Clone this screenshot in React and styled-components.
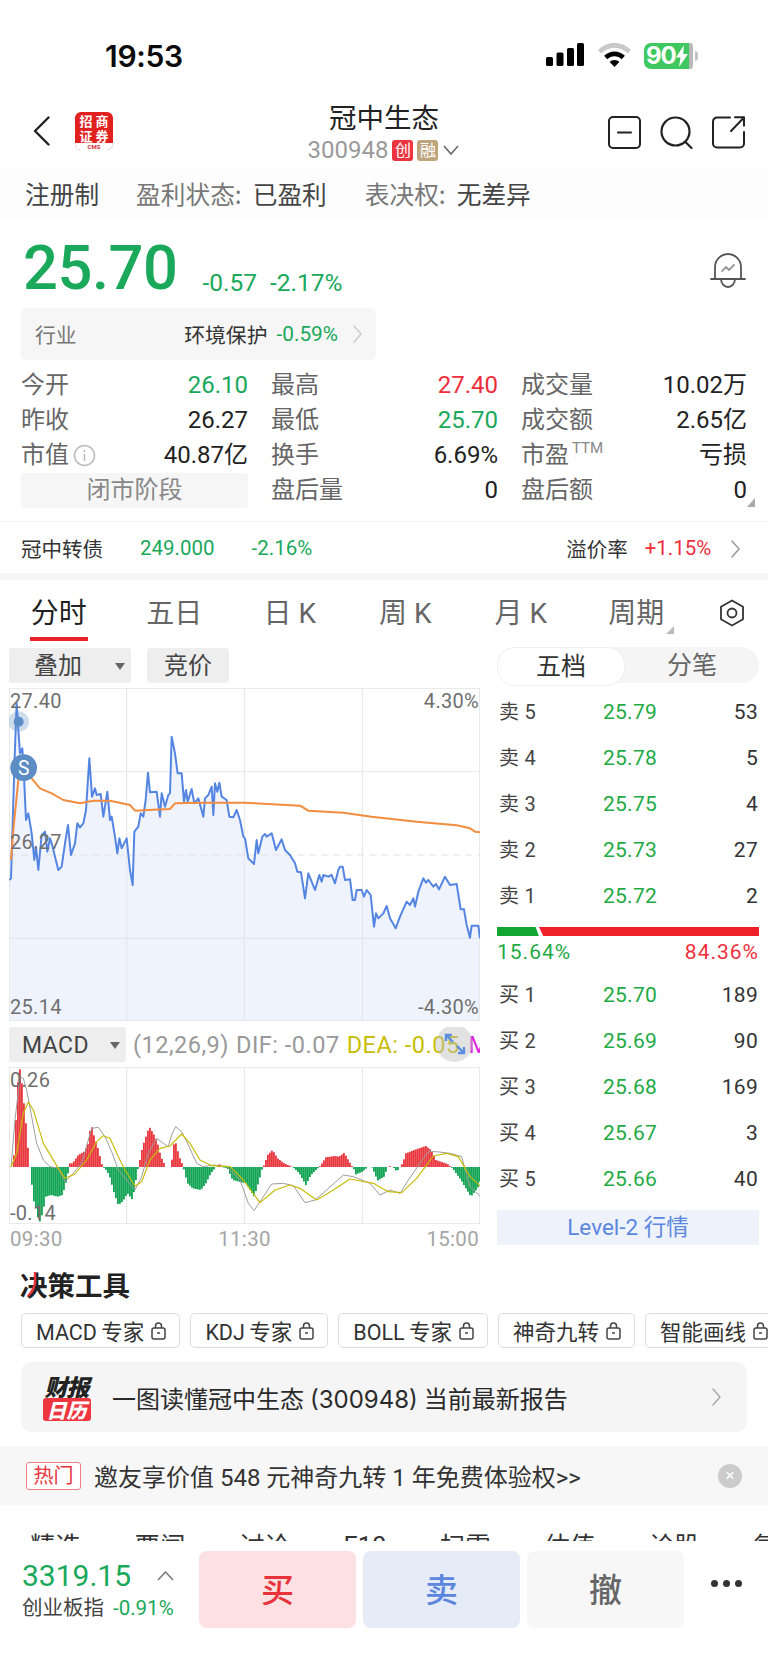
import React from 'react';
import styled, { createGlobalStyle } from 'styled-components';

const GREEN = '#1aa85b';
const RED = '#ee2f3b';

const GlobalStyle = createGlobalStyle`
	html, body {
		margin: 0;
		padding: 0;
		background: #fff;
	}
	body {
		font-family: Roboto, "Noto Sans CJK SC", sans-serif;
		color: #222;
	}
	* {
		box-sizing: border-box;
	}
`;

const Page = styled.div`
	width: 768px;
	height: 1669px;
	overflow: hidden;
	background: #fff;
	display: flex;
	flex-direction: column;
`;

/* status bar */
const StatusBar = styled.div`
	height: 104px;
	padding: 43px 75px 0 105px;
	display: flex;
	align-items: flex-start;
`;

const Clock = styled.div`
	font-size: 30px;
	line-height: 27px;
	font-weight: 600;
	font-family: Inter, sans-serif;
	letter-spacing: -0.3px;
	color: #0b0b0b;
`;

const StatusIcons = styled.div`
	margin-left: auto;
	display: flex;
	align-items: flex-start;
	gap: 14px;
`;

const Battery = styled.div`
	position: relative;
	width: 49px;
	height: 26px;
	margin-left: -1px;
	display: flex;
	align-items: center;
	justify-content: flex-start;
	padding-left: 2px;
	border-radius: 7px 3px 3px 7px;
	background: linear-gradient(90deg, #3fc85f 0 45px, #b9b9b9 45px);
	color: #fff;
	font-size: 24px;
	font-weight: 700;
	line-height: 26px;
	font-family: Inter, sans-serif;
	letter-spacing: -1px;
	&::after {
		content: '';
		position: absolute;
		right: -5px;
		top: 8px;
		width: 3px;
		height: 10px;
		border-radius: 0 3px 3px 0;
		background: #c4c4c4;
	}
`;

/* header */
const Header = styled.div`
	height: 66px;
	padding: 8px 23px 0;
	display: grid;
	grid-template-columns: 1fr auto 1fr;
`;

const HeaderLeft = styled.div`
	display: flex;
	align-items: center;
	align-self: start;
	height: 38px;
	padding-left: 10px;
	gap: 25px;
`;

const AppLogo = styled.div`
	width: 38px;
	height: 38px;
	border-radius: 6px;
	overflow: hidden;
	background: #e0211f;
	display: flex;
	flex-direction: column;
`;

const LogoText = styled.div`
	height: 31px;
	padding: 2px 3px 0;
	display: grid;
	grid-template-columns: 1fr 1fr;
	color: #fff;
	font-size: 13px;
	line-height: 14px;
	font-weight: 700;
	font-family: "Noto Sans CJK SC", sans-serif;
	text-align: center;
	white-space: nowrap;
`;

const LogoFoot = styled.div`
	flex: 1;
	background: #fff;
	color: #c33;
	font-size: 6px;
	line-height: 7px;
	text-align: center;
	font-weight: 700;
`;

const HeaderCenter = styled.div`
	margin-top: -9px;
	display: flex;
	flex-direction: column;
	align-items: center;
`;

const Title = styled.div`
	font-size: 27.5px;
	line-height: 26px;
	color: #222;
	font-family: "Noto Sans CJK SC", sans-serif;
`;

const CodeRow = styled.div`
	margin-top: 11px;
	height: 20px;
	display: flex;
	align-items: center;
	color: #9a9a9a;
	font-size: 24px;
`;

const CodeTag = styled.span`
	width: 21px;
	height: 21px;
	margin-left: ${p => p.$gap}px;
	border-radius: 3px;
	background: ${p => p.$bg};
	color: #fff;
	font-size: 16px;
	line-height: 21px;
	text-align: center;
`;

const HeaderRight = styled.div`
	justify-self: end;
	padding-top: 4px;
	display: flex;
	gap: 19px;
`;

/* meta row */
const MetaRow = styled.div`
	height: 49px;
	padding: 0 0 4px 25px;
	background: #fdfdfd;
	display: flex;
	align-items: center;
	font-size: 24.7px;
	color: #444;
	font-family: "Noto Sans CJK SC", sans-serif;
`;

const MetaItem = styled.span`
	margin-left: ${p => p.$gap || 0}px;
	color: ${p => p.$color || '#444'};
`;

/* price */
const PriceRow = styled.div`
	height: 89px;
	padding: 26px 22px 0 23px;
	display: flex;
	align-items: flex-start;
`;

const Price = styled.div`
	font-size: 61.5px;
	line-height: 46px;
	font-weight: 500;
	color: ${GREEN};
	letter-spacing: -0.5px;
`;

const PriceChange = styled.div`
	margin-left: ${p => p.$gap}px;
	margin-top: 27px;
	font-size: 24.5px;
	line-height: 22px;
	color: ${GREEN};
`;

const BellWrap = styled.div`
	margin-left: auto;
	margin-top: 7px;
`;

/* industry box */
const IndustryBox = styled.div`
	width: 355px;
	height: 52px;
	margin-left: 21px;
	padding: 0 14px;
	border-radius: 6px;
	background: #f6f6f6;
	display: flex;
	align-items: center;
	font-size: 20.8px;
`;

const IndustryLabel = styled.span`
	color: #777;
	margin-right: auto;
`;

const IndustryName = styled.span`
	color: #333;
`;

const IndustryChange = styled.span`
	margin: 0 15px 0 9px;
	color: ${GREEN};
`;

/* stats */
const Stats = styled.div`
	position: relative;
	padding: 8px 21px 13px 21px;
	display: grid;
	grid-template-columns: 227px 227px 226px;
	column-gap: 23px;
	border-bottom: 1px solid #f2f2f2;
`;

const Stat = styled.div`
	height: 35px;
	display: flex;
	align-items: center;
	justify-content: space-between;
	font-size: 24px;
	line-height: 35px;
	white-space: nowrap;
`;

const StatLabel = styled.span`
	color: #666;
	display: inline-flex;
	align-items: center;
`;

const StatValue = styled.span`
	color: ${p => p.$color || '#222'};
`;

const Sup = styled.span`
	font-size: 15px;
	line-height: 15px;
	margin: -14px 0 0 3px;
	color: #888;
`;

const PhaseCell = styled.div`
	height: 35px;
	border-radius: 4px;
	background: #f6f6f6;
	color: #888;
	font-size: 24px;
	line-height: 35px;
	text-align: center;
`;

const CornerMark = styled.div`
	position: absolute;
	right: 13px;
	bottom: 14px;
	width: 0;
	height: 0;
	border-left: 8px solid transparent;
	border-bottom: 9px solid #aaa;
`;

/* bond row */
const BondRow = styled.div`
	height: 51px;
	padding: 0 28px 0 21px;
	display: flex;
	align-items: center;
	font-size: 20.5px;
`;

const BondText = styled.span`
	margin-left: ${p => p.$gap || 0}px;
	color: ${p => p.$color || '#333'};
`;

const BondChevron = styled.span`
	margin-left: auto;
	height: 18px;
`;

const Band = styled.div`
	height: 7px;
	background: #f6f6f6;
`;

/* chart tabs */
const TabBar = styled.div`
	position: relative;
	height: 62px;
	padding: 18px 0 0 1px;
	display: flex;
`;

const Tab = styled.div`
	width: 115.5px;
	text-align: center;
`;

const TabLabel = styled.span`
	display: inline-block;
	padding: 0 1px 7px;
	font-size: 28px;
	line-height: 32px;
	color: ${p => (p.$active ? '#222' : '#666')};
	border-bottom: 4px solid ${p => (p.$active ? '#e8222c' : 'transparent')};
	white-space: nowrap;
`;

const TabIcon = styled.div`
	margin-left: 25px;
	padding-top: 1px;
`;

const TabCorner = styled.div`
	position: absolute;
	left: 666px;
	top: 46px;
	width: 0;
	height: 0;
	border-left: 8px solid transparent;
	border-bottom: 8px solid #bbb;
`;

/* chart area */
const ChartArea = styled.div`
	height: 612px;
	padding: 0 10px 0 9px;
	display: grid;
	grid-template-columns: 471px 262px;
	column-gap: 17px;
`;

const LeftCol = styled.div`
	padding-top: 6px;
`;

const Toolbar = styled.div`
	height: 35px;
	margin-bottom: 5px;
	display: flex;
	gap: 16px;
`;

const ToolButton = styled.div`
	position: relative;
	flex: none;
	width: ${p => p.$w}px;
	height: 35px;
	padding-right: ${p => (p.$caret ? 24 : 0)}px;
	border-radius: 3px;
	background: #eeeeee;
	color: #444;
	font-size: ${p => p.$size || 24}px;
	line-height: 37px;
	text-align: center;
	&::after {
		content: '';
		display: ${p => (p.$caret ? 'block' : 'none')};
		position: absolute;
		right: 6px;
		top: 15px;
		border-left: 5.5px solid transparent;
		border-right: 5.5px solid transparent;
		border-top: 7px solid #666;
	}
`;

const ChartBox = styled.div`
	position: relative;
	height: ${p => p.$h}px;
	svg {
		display: block;
	}
`;

const ChartLabel = styled.span`
	position: absolute;
	${p => (p.$right ? 'right: 1px;' : 'left: 1px;')}
	${p => (p.$bottom !== undefined ? `bottom: ${p.$bottom}px;` : `top: ${p.$top}px;`)}
	font-size: 20px;
	line-height: 20px;
	letter-spacing: 0.3px;
	color: #6f6f6f;
`;

const MacdHeader = styled.div`
	position: relative;
	height: 35px;
	margin: 6px 0 5px;
	display: flex;
	align-items: center;
	overflow: hidden;
	white-space: nowrap;
	font-size: 23.5px;
	letter-spacing: 0.5px;
`;

const MacdText = styled.span`
	margin-left: ${p => p.$gap}px;
	color: ${p => p.$color};
`;

const ExpandCircle = styled.div`
	position: absolute;
	left: 427px;
	top: -2px;
	width: 37px;
	height: 37px;
	border-radius: 50%;
	background: rgba(190, 190, 190, 0.45);
	display: flex;
	align-items: center;
	justify-content: center;
`;

const TimeAxis = styled.div`
	height: 30px;
	display: flex;
	align-items: center;
	justify-content: space-between;
	padding: 0 1px;
	font-size: 20.5px;
	letter-spacing: 0.3px;
	color: #a5a5a5;
`;

/* order book */
const RightCol = styled.div`
	padding-top: 5px;
`;

const Segment = styled.div`
	height: 36px;
	border-radius: 18px;
	background: #f5f5f5;
	display: grid;
	grid-template-columns: 128px 1fr;
	font-size: 25px;
	line-height: 37px;
	text-align: center;
`;

const SegmentItem = styled.div`
	border-radius: 18px;
	color: ${p => (p.$active ? '#333' : '#666')};
	background: ${p => (p.$active ? '#fff' : 'transparent')};
	border: ${p => (p.$active ? '1px solid #eee' : 'none')};
`;

const BookRows = styled.div`
	margin-top: ${p => p.$gap}px;
`;

const BookRow = styled.div`
	height: 46px;
	padding: 1px 1px 0 2px;
	display: grid;
	grid-template-columns: 1fr auto 1fr;
	align-items: center;
	font-size: 21px;
	letter-spacing: 0.3px;
`;

const BookLabel = styled.span`
	font-size: 20px;
	line-height: 24px;
	color: #444;
`;

const BookPrice = styled.span`
	color: #22aa44;
	padding-left: 3px;
`;

const BookQty = styled.span`
	text-align: right;
	color: #333;
`;

const RatioBar = styled.div`
	margin-top: 9px;
	height: 9px;
	display: flex;
`;

const RatioPart = styled.div`
	width: ${p => p.$w}%;
	background: ${p => p.$color};
	clip-path: ${p => p.$clip};
`;

const RatioText = styled.div`
	margin-top: 4px;
	height: 24px;
	display: flex;
	justify-content: space-between;
	font-size: 21px;
	line-height: 24px;
	letter-spacing: 1px;
`;

const RatioValue = styled.span`
	color: ${p => p.$color};
`;

const LevelButton = styled.div`
	margin-top: 9px;
	height: 35px;
	background: #edf2fb;
	color: #5b87e0;
	font-size: 22.5px;
	line-height: 35px;
	text-align: center;
`;

/* tools */
const ToolSection = styled.div`
	padding: 15px 0 0 21px;
`;

const SectionTitle = styled.div`
	position: relative;
	width: 112px;
	height: 30px;
	margin-left: -1px;
	font-size: 27.5px;
	line-height: 30px;
	font-weight: 700;
	color: #222;
	white-space: nowrap;
	font-family: "Noto Sans CJK SC", sans-serif;
	svg {
		position: absolute;
		left: 6px;
		top: 2px;
	}
`;

const ChipRow = styled.div`
	margin-top: 14px;
	display: flex;
	gap: 10px;
	white-space: nowrap;
`;

const Chip = styled.div`
	flex: none;
	height: 35px;
	padding: 0 13px 0 14px;
	border: 1px solid #ddd;
	border-radius: 5px;
	display: flex;
	align-items: center;
	gap: 7px;
	font-size: 21.5px;
	color: #333;
`;

const ReportCard = styled.div`
	width: 726px;
	height: 70px;
	margin-top: 14px;
	padding: 0 26px 0 21px;
	border-radius: 10px;
	background: #f5f5f5;
	display: flex;
	align-items: center;
	font-size: 24px;
	color: #2a2a2a;
`;

const ReportLogo = styled.div`
	width: 49px;
	margin-right: 21px;
	display: flex;
	flex-direction: column;
	align-items: center;
	font-family: "Noto Sans CJK SC", sans-serif;
	font-weight: 900;
	font-style: italic;
`;

const ReportTop = styled.div`
	font-size: 23px;
	line-height: 24px;
	color: #222;
	letter-spacing: -1px;
	white-space: nowrap;
`;

const ReportBottom = styled.div`
	width: 48px;
	height: 23px;
	border-radius: 3px;
	background: #ee3640;
	color: #fff;
	font-size: 20px;
	line-height: 23px;
	text-align: center;
	white-space: nowrap;
`;

const ReportText = styled.span`
	margin-right: auto;
`;

const ReportCode = styled.span`
	font-family: Inter, sans-serif;
`;

/* promo */
const Promo = styled.div`
	height: 59px;
	margin-top: 14px;
	padding: 0 26px;
	background: #f7f7f7;
	display: flex;
	align-items: center;
	font-size: 24px;
	color: #333;
`;

const HotTag = styled.span`
	width: 55px;
	height: 28px;
	margin-right: 13px;
	border: 1px solid #ef7d84;
	border-radius: 3px;
	background: #fff;
	color: #e8323c;
	font-size: 20px;
	line-height: 26px;
	text-align: center;
`;

const CloseDot = styled.div`
	width: 24px;
	height: 24px;
	margin-left: auto;
	border-radius: 50%;
	background: #cbcbcb;
	color: #fff;
	font-size: 17px;
	line-height: 23px;
	text-align: center;
`;

/* clipped news tabs */
const NewsTabs = styled.div`
	height: 36px;
	overflow: hidden;
	padding: 26px 0 0 30px;
	display: flex;
	gap: 53.5px;
	font-size: 25.5px;
	line-height: 30px;
	white-space: nowrap;
	color: #333;
`;

/* bottom bar */
const BottomBar = styled.div`
	flex: 1;
	padding: 10px 0 0 22px;
	display: flex;
	align-items: flex-start;
`;

const IndexBox = styled.div`
	flex: none;
	width: 177px;
	padding-top: 10px;
`;

const IndexTop = styled.div`
	height: 30px;
	display: flex;
	align-items: center;
	gap: 26px;
`;

const IndexValue = styled.span`
	font-size: 30px;
	line-height: 30px;
	color: ${GREEN};
`;

const IndexBottom = styled.div`
	margin-top: 4px;
	display: flex;
	align-items: center;
	gap: 9px;
	font-size: 20.5px;
	line-height: 26px;
	color: #444;
	white-space: nowrap;
`;

const IndexChange = styled.span`
	color: ${GREEN};
`;

const TradeButton = styled.div`
	flex: none;
	width: 157px;
	height: 77px;
	margin-right: 7px;
	border-radius: 8px;
	background: ${p => p.$bg};
	color: ${p => p.$color};
	font-size: 33px;
	font-weight: 500;
	line-height: 75px;
	text-align: center;
	font-family: "Noto Sans CJK SC", sans-serif;
`;

const MoreDots = styled.div`
	margin: 29px 0 0 20px;
	display: flex;
	gap: 5px;
`;

const Dot = styled.i`
	width: 7px;
	height: 7px;
	border-radius: 50%;
	background: #333;
`;

const MetaCaret = styled.svg`
	margin-left: 4px;
`;

/* chart data, coordinates are in 1/3 px of the page */
const pricePts = '28,870 33,865 38,700 44,500 50,340 55,420 60,490 67,475 72,560 78,690 85,670 95,730 103,810 108,770 115,840 125,735 135,725 142,785 150,745 158,770 165,800 175,840 185,830 195,760 204,705 213,795 225,760 232,700 240,712 250,700 258,660 268,505 276,620 285,595 290,615 302,612 310,680 322,605 330,690 335,680 345,740 352,790 358,745 365,775 380,745 390,840 398,885 403,725 415,710 422,670 430,680 437,630 444,548 450,607 470,605 480,680 485,610 495,650 505,615 510,610 515,440 525,490 533,550 545,550 552,635 558,600 563,635 575,597 583,640 595,625 610,680 615,625 625,615 635,590 640,675 645,580 652,605 658,578 665,620 680,630 688,680 700,682 710,660 720,690 730,740 735,745 745,805 762,822 770,750 775,790 787,740 795,732 800,740 815,730 828,780 845,748 855,780 870,795 885,820 892,845 903,847 915,925 925,850 945,900 958,855 965,875 970,855 985,860 995,855 1005,880 1015,840 1020,830 1028,830 1035,870 1050,868 1058,930 1065,930 1070,900 1085,900 1092,920 1100,900 1112,915 1122,1010 1128,970 1135,985 1150,970 1160,948 1170,985 1187,1015 1200,980 1220,935 1230,945 1240,925 1245,950 1255,905 1270,865 1278,878 1285,870 1300,890 1308,882 1317,898 1335,860 1350,885 1370,882 1382,958 1392,958 1400,1005 1410,1043 1415,1007 1435,1007 1440,1045';
const avgPts = '33,810 40,720 55,570 75,550 95,565 120,595 155,610 190,630 240,640 280,632 330,632 390,645 405,662 445,660 510,657 525,640 600,638 730,638 900,647 925,662 1030,668 1115,680 1250,695 1370,706 1410,715 1425,725 1440,727';
const difPts = '33,441 45,300 60,170 70,175 80,210 95,290 110,370 130,420 150,440 175,445 195,485 215,465 245,430 265,360 275,325 295,322 315,350 335,395 355,450 380,480 405,510 425,470 445,400 470,355 490,370 505,380 515,345 527,320 545,335 565,375 590,430 610,440 640,435 680,440 720,480 745,550 762,572 790,530 815,492 850,490 880,497 915,548 945,540 980,510 1030,465 1060,470 1110,490 1140,525 1170,510 1200,520 1225,480 1260,430 1285,395 1310,395 1350,400 1385,410 1410,500 1440,528';
const deaPts = '33,441 50,400 70,280 85,247 100,270 130,370 175,445 195,475 225,462 260,420 290,365 310,347 330,355 355,410 375,450 405,498 425,485 450,420 480,385 510,378 545,342 570,370 600,420 635,437 690,440 730,480 780,548 825,510 870,495 900,505 950,540 1000,510 1050,477 1120,490 1165,515 1205,518 1250,475 1300,408 1340,400 1375,410 1410,470 1440,497';
const histEnv = [[33,441],[40,400],[45,300],[50,200],[55,135],[62,180],[70,260],[78,340],[85,441],[90,441],[95,530],[105,565],[115,610],[125,580],[135,530],[150,525],[170,530],[185,525],[200,470],[203,441],[205,430],[215,430],[232,405],[250,395],[262,370],[270,310],[280,350],[290,380],[305,441],[312,445],[325,465],[340,520],[352,555],[365,545],[380,520],[395,540],[410,450],[413,441],[415,430],[425,380],[435,350],[445,320],[460,345],[470,370],[480,410],[495,441],[512,441],[515,375],[525,370],[535,410],[548,441],[550,455],[560,490],[575,505],[600,510],[615,490],[630,460],[645,441],[655,430],[662,441],[680,445],[695,480],[715,485],[735,490],[760,530],[775,480],[785,441],[790,435],[800,405],[815,390],[830,415],[850,430],[875,441],[880,445],[895,460],[915,495],[930,465],[955,441],[960,435],[975,412],[1000,408],[1015,410],[1030,398],[1045,425],[1055,441],[1058,445],[1065,463],[1085,455],[1100,441],[1112,441],[1115,445],[1130,482],[1150,470],[1160,441],[1165,438],[1175,441],[1180,445],[1188,455],[1197,441],[1205,430],[1215,400],[1240,390],[1275,378],[1290,390],[1305,420],[1340,432],[1350,441],[1355,445],[1380,480],[1410,530],[1430,505],[1442,470]];

function histAt(x) {
	for (let i = 1; i < histEnv.length; i++) {
		const [x0, y0] = histEnv[i - 1];
		const [x1, y1] = histEnv[i];
		if (x <= x1) return y0 + ((y1 - y0) * (x - x0)) / (x1 - x0 || 1);
	}
	return 441;
}

// one bar every 2 css px, aligned to the pixel grid so the stripes stay even
const histBars = [];
for (let x = 33; x < 1440; x += 6) {
	histBars.push({ x, y: histAt(x) });
}

const GridLines = ({ top, bottom, rows }) => (
	<g>
		<rect x="28" y={top + 1} width="1411" height={bottom - top - 2} fill="none" stroke="#e6e6e6" strokeWidth="3" />
		{[380, 733, 1087].map(x => (
			<line key={x} x1={x} x2={x} y1={top} y2={bottom} stroke="#e2e4e8" strokeWidth="3" />
		))}
		{rows}
	</g>
);

const PriceChart = () => (
	<svg width="471" height="333" viewBox="27 294 1413 999">
		<polygon points={`28,1293 ${pricePts} 1440,1293`} fill="#eff3fd" />
		<GridLines
			top={294}
			bottom={1293}
			rows={
				<>
					<line x1="27" x2="1440" y1="545" y2="545" stroke="#eaeaea" strokeWidth="3" />
					<line x1="27" x2="1440" y1="795" y2="795" stroke="#e2e2e2" strokeWidth="3" strokeDasharray="22 14" />
					<line x1="27" x2="1440" y1="1045" y2="1045" stroke="#dfe2e8" strokeWidth="3" />
				</>
			}
		/>
		<polyline points={pricePts} fill="none" stroke="#5585e2" strokeWidth="6" strokeLinejoin="round" />
		<polyline points={avgPts} fill="none" stroke="#f28c3f" strokeWidth="6" strokeLinejoin="round" />
		<circle cx="56" cy="395" r="31" fill="#5b8dc4" opacity="0.3" />
		<circle cx="56" cy="395" r="15" fill="#5b8dc4" />
		<circle cx="71" cy="533" r="40" fill="#5b8dc4" />
		<text x="71" y="554" fontSize="58" fill="#fff" textAnchor="middle" fontFamily="Roboto, sans-serif">S</text>
	</svg>
);

const MacdChart = () => (
	<svg width="471" height="157" viewBox="27 141 1413 471">
		<GridLines top={141} bottom={612} />
		{histBars.map(b => (
			<rect
				key={b.x}
				x={b.x}
				width="5.5"
				y={Math.min(b.y, 441)}
				height={Math.abs(b.y - 441)}
				fill={b.y < 441 ? '#e9383f' : '#14a456'}
			/>
		))}
		<polyline points={difPts} fill="none" stroke="#9d9d9d" strokeWidth="3" strokeLinejoin="round" />
		<polyline points={deaPts} fill="none" stroke="#c8bd08" strokeWidth="3.5" strokeLinejoin="round" />
	</svg>
);

const BackIcon = () => (
	<svg width="17" height="30" viewBox="0 0 17 30" fill="none" stroke="#222" strokeWidth="2.4" strokeLinecap="round" strokeLinejoin="round">
		<path d="M15.5 1.5 2 15l13.5 13.5" />
	</svg>
);

const MinusBoxIcon = () => (
	<svg width="33" height="33" viewBox="0 0 33 33" fill="none" stroke="#222" strokeWidth="2" strokeLinecap="round">
		<rect x="1" y="1" width="31" height="31" rx="4" />
		<path d="M10 16.5h13" />
	</svg>
);

const SearchIcon = () => (
	<svg width="33" height="33" viewBox="0 0 33 33" fill="none" stroke="#222" strokeWidth="2.2" strokeLinecap="round">
		<circle cx="15.5" cy="15.5" r="14" />
		<path d="m25.5 26 6 6" />
	</svg>
);

const ShareIcon = () => (
	<svg width="33" height="33" viewBox="0 0 33 33" fill="none" stroke="#222" strokeWidth="2" strokeLinecap="round" strokeLinejoin="round">
		<path d="M18 1.5H5A4 4 0 0 0 1 5.5v22A4 4 0 0 0 5 31.5h23a4 4 0 0 0 4-4V16" />
		<path d="M19 15 32 1.5M23 1.2h9v8.5" />
	</svg>
);

const BellIcon = () => (
	<svg width="36" height="36" viewBox="0 0 36 36" fill="none" stroke="#555" strokeWidth="1.8" strokeLinecap="round" strokeLinejoin="round">
		<path d="M5 26V15a13 13 0 0 1 26 0v11" />
		<path d="M1 27h34" />
		<path d="M11 27a7 8 0 0 0 14 0" />
		<path d="m12 19 4-4 3 3 5-5" stroke="#999" />
	</svg>
);

const Chevron = ({ color = '#bbb', width = 9, height = 18 }) => (
	<svg width={width} height={height} viewBox="0 0 9 18" fill="none" stroke={color} strokeWidth="1.5" strokeLinecap="round" strokeLinejoin="round">
		<path d="m1 1 7 8-7 8" />
	</svg>
);

const LockIcon = () => (
	<svg width="15" height="18" viewBox="0 0 15 18" fill="none" stroke="#444" strokeWidth="1.5">
		<rect x="1" y="6" width="13" height="11" rx="2" />
		<path d="M4.5 6V4a3 3 0 0 1 6 0v2" />
		<path d="M6 11h3" />
	</svg>
);

const InfoIcon = styled.svg`
	margin-left: 4px;
`;

const SignalIcon = () => (
	<svg width="38" height="23" viewBox="0 0 38 23" fill="#000">
		<rect x="0" y="14" width="7" height="9" rx="1.5" />
		<rect x="10.5" y="9.5" width="7" height="13.5" rx="1.5" />
		<rect x="21" y="5" width="7" height="18" rx="1.5" />
		<rect x="31" y="0" width="7" height="23" rx="1.5" />
	</svg>
);

const WifiIcon = () => (
	<svg width="33" height="24" viewBox="0 0 33 24">
		<path d="M16.5 0C10 0 4.500 2.600 0 7l3.200 3.400C7 6.800 11.500 4.700 16.500 4.700s9.500 2.100 13.300 5.700L33 7C28.500 2.600 23 0 16.500 0z" fill="#c9c9c9" />
		<path d="M16.500 8.500c-4 0-7.500 1.600-10.400 4.300l3.200 3.400c2-1.800 4.400-3 7.200-3s5.200 1.200 7.200 3l3.200-3.400C24 10.100 20.500 8.500 16.500 8.500z" fill="#000" />
		<path d="M16.500 17c-1.900 0-3.500.7-4.800 1.900l4.800 5.100 4.800-5.100c-1.300-1.200-2.900-1.900-4.800-1.900z" fill="#000" />
	</svg>
);

const BoltIcon = () => (
	<svg width="12" height="22" viewBox="0 0 12 22" fill="#fff">
		<path d="M8 0 0 12.500h4.500L3 22l9-13H7.200z" />
	</svg>
);

const HexIcon = () => (
	<svg width="26" height="28" viewBox="0 0 26 28" fill="none" stroke="#333" strokeWidth="1.8" strokeLinejoin="round">
		<path d="M13 1.500 24 7.700v12.600L13 26.500 2 20.300V7.700z" />
		<circle cx="13" cy="14" r="4.500" />
	</svg>
);

const ExpandIcon = () => (
	<svg width="24" height="24" viewBox="0 0 24 24" fill="none" stroke="#5b8de0" strokeWidth="2.4">
		<path d="M3 9V3h6M3 3l7 7M21 15v6h-6M21 21l-7-7" />
	</svg>
);

const orderAsks = [['卖 5', '25.79', '53'], ['卖 4', '25.78', '5'], ['卖 3', '25.75', '4'], ['卖 2', '25.73', '27'], ['卖 1', '25.72', '2']];
const orderBids = [['买 1', '25.70', '189'], ['买 2', '25.69', '90'], ['买 3', '25.68', '169'], ['买 4', '25.67', '3'], ['买 5', '25.66', '40']];
const chips = ['MACD\u2009专家', 'KDJ\u2009专家', 'BOLL\u2009专家', '神奇九转', '智能画线'];

const OrderRows = ({ rows, gap }) => (
	<BookRows $gap={gap}>
		{rows.map(r => (
			<BookRow key={r[0]}>
				<BookLabel>{r[0]}</BookLabel>
				<BookPrice>{r[1]}</BookPrice>
				<BookQty>{r[2]}</BookQty>
			</BookRow>
		))}
	</BookRows>
);

export default function App() {
	return (
		<Page>
			<GlobalStyle />
			<StatusBar>
				<Clock>19:53</Clock>
				<StatusIcons>
					<SignalIcon />
					<WifiIcon />
					<Battery>90<BoltIcon /></Battery>
				</StatusIcons>
			</StatusBar>

			<Header>
				<HeaderLeft>
					<BackIcon />
					<AppLogo>
						<LogoText>
							<span>招</span><span>商</span><span>证</span><span>券</span>
						</LogoText>
						<LogoFoot>CMS</LogoFoot>
					</AppLogo>
				</HeaderLeft>
				<HeaderCenter>
					<Title>冠中生态</Title>
					<CodeRow>
						300948
						<CodeTag $bg="#ec3340" $gap={4}>创</CodeTag>
						<CodeTag $bg="#bea57e" $gap={4}>融</CodeTag>
						<MetaCaret width="18" height="12" viewBox="0 0 18 12" fill="none" stroke="#666" strokeWidth="1.5">
							<path d="m2 2 7 8 7-8" />
						</MetaCaret>
					</CodeRow>
				</HeaderCenter>
				<HeaderRight>
					<MinusBoxIcon />
					<SearchIcon />
					<ShareIcon />
				</HeaderRight>
			</Header>

			<MetaRow>
				<MetaItem>注册制</MetaItem>
				<MetaItem $gap={37} $color="#777">盈利状态:</MetaItem>
				<MetaItem $gap={11}>已盈利</MetaItem>
				<MetaItem $gap={38} $color="#777">表决权:</MetaItem>
				<MetaItem $gap={11}>无差异</MetaItem>
			</MetaRow>

			<PriceRow>
				<Price>25.70</Price>
				<PriceChange $gap={25}>-0.57</PriceChange>
				<PriceChange $gap={13}>-2.17%</PriceChange>
				<BellWrap><BellIcon /></BellWrap>
			</PriceRow>

			<IndustryBox>
				<IndustryLabel>行业</IndustryLabel>
				<IndustryName>环境保护</IndustryName>
				<IndustryChange>-0.59%</IndustryChange>
				<Chevron color="#ccc" />
			</IndustryBox>

			<Stats>
				<Stat><StatLabel>今开</StatLabel><StatValue $color={GREEN}>26.10</StatValue></Stat>
				<Stat><StatLabel>最高</StatLabel><StatValue $color={RED}>27.40</StatValue></Stat>
				<Stat><StatLabel>成交量</StatLabel><StatValue>10.02万</StatValue></Stat>
				<Stat><StatLabel>昨收</StatLabel><StatValue>26.27</StatValue></Stat>
				<Stat><StatLabel>最低</StatLabel><StatValue $color={GREEN}>25.70</StatValue></Stat>
				<Stat><StatLabel>成交额</StatLabel><StatValue>2.65亿</StatValue></Stat>
				<Stat>
					<StatLabel>
						市值
						<InfoIcon width="23" height="23" viewBox="0 0 23 23" fill="none" stroke="#bbb" strokeWidth="1.5">
							<circle cx="11.500" cy="11.500" r="10" />
							<path d="M11.500 10v7M11.500 6v2" />
						</InfoIcon>
					</StatLabel>
					<StatValue>40.87亿</StatValue>
				</Stat>
				<Stat><StatLabel>换手</StatLabel><StatValue>6.69%</StatValue></Stat>
				<Stat><StatLabel>市盈<Sup>TTM</Sup></StatLabel><StatValue>亏损</StatValue></Stat>
				<PhaseCell>闭市阶段</PhaseCell>
				<Stat><StatLabel>盘后量</StatLabel><StatValue>0</StatValue></Stat>
				<Stat><StatLabel>盘后额</StatLabel><StatValue>0</StatValue></Stat>
				<CornerMark />
			</Stats>

			<BondRow>
				<BondText>冠中转债</BondText>
				<BondText $gap={37} $color={GREEN}>249.000</BondText>
				<BondText $gap={37} $color={GREEN}>-2.16%</BondText>
				<BondText $gap={254}>溢价率</BondText>
				<BondText $gap={17} $color={RED}>+1.15%</BondText>
				<BondChevron><Chevron color="#999" /></BondChevron>
			</BondRow>
			<Band />

			<TabBar>
				<Tab><TabLabel $active>分时</TabLabel></Tab>
				<Tab><TabLabel>五日</TabLabel></Tab>
				<Tab><TabLabel>日 K</TabLabel></Tab>
				<Tab><TabLabel>周 K</TabLabel></Tab>
				<Tab><TabLabel>月 K</TabLabel></Tab>
				<Tab><TabLabel>周期</TabLabel></Tab>
				<TabIcon><HexIcon /></TabIcon>
				<TabCorner />
			</TabBar>

			<ChartArea>
				<LeftCol>
					<Toolbar>
						<ToolButton $w={122} $caret>叠加</ToolButton>
						<ToolButton $w={82}>竞价</ToolButton>
					</Toolbar>
					<ChartBox $h={333}>
						<PriceChart />
						<ChartLabel $top={3}>27.40</ChartLabel>
						<ChartLabel $top={3} $right>4.30%</ChartLabel>
						<ChartLabel $top={144}>26.27</ChartLabel>
						<ChartLabel $bottom={4}>25.14</ChartLabel>
						<ChartLabel $bottom={4} $right>-4.30%</ChartLabel>
					</ChartBox>
					<MacdHeader>
						<ToolButton $w={117} $caret $size={23}>MACD</ToolButton>
						<MacdText $gap={7} $color="#999">(12,26,9)</MacdText>
						<MacdText $gap={7} $color="#999">DIF: -0.07</MacdText>
						<MacdText $gap={7} $color="#c8bd08">DEA: -0.05</MacdText>
						<MacdText $gap={9} $color="#e020e0">M</MacdText>
						<ExpandCircle><ExpandIcon /></ExpandCircle>
					</MacdHeader>
					<ChartBox $h={157}>
						<MacdChart />
						<ChartLabel $top={3}>0.26</ChartLabel>
						<ChartLabel $bottom={1}>-0.14</ChartLabel>
					</ChartBox>
					<TimeAxis>
						<span>09:30</span>
						<span>11:30</span>
						<span>15:00</span>
					</TimeAxis>
				</LeftCol>

				<RightCol>
					<Segment>
						<SegmentItem $active>五档</SegmentItem>
						<SegmentItem>分笔</SegmentItem>
					</Segment>
					<OrderRows rows={orderAsks} gap={5} />
					<RatioBar>
						<RatioPart $w={16} $color="#12a52f" $clip="polygon(0 0, 92% 0, 100% 100%, 0 100%)" />
						<RatioPart $w={84} $color="#ee2028" $clip="polygon(0 0, 100% 0, 100% 100%, 2% 100%)" />
					</RatioBar>
					<RatioText>
						<RatioValue $color="#22aa44">15.64%</RatioValue>
						<RatioValue $color={RED}>84.36%</RatioValue>
					</RatioText>
					<OrderRows rows={orderBids} gap={7} />
					<LevelButton>Level-2 行情</LevelButton>
				</RightCol>
			</ChartArea>

			<ToolSection>
				<SectionTitle>
					决策工具
					<svg width="14" height="26" viewBox="0 0 14 26" fill="none" stroke="#e8323c" strokeWidth="2.4">
						<path d="M9 1v9c0 6-3 11-7 15" />
					</svg>
				</SectionTitle>
				<ChipRow>
					{chips.map(c => (
						<Chip key={c}>{c}<LockIcon /></Chip>
					))}
				</ChipRow>
				<ReportCard>
					<ReportLogo>
						<ReportTop>财报</ReportTop>
						<ReportBottom>日历</ReportBottom>
					</ReportLogo>
					<ReportText>一图读懂冠中生态 <ReportCode>(300948)</ReportCode> 当前最新报告</ReportText>
					<Chevron color="#aaa" />
				</ReportCard>
			</ToolSection>

			<Promo>
				<HotTag>热门</HotTag>
				邀友享价值 548 元神奇九转 1 年免费体验权&gt;&gt;
				<CloseDot>×</CloseDot>
			</Promo>

			<NewsTabs>
				<span>精选</span>
				<span>要闻</span>
				<span>讨论</span>
				<span>F10</span>
				<span>扫雷</span>
				<span>估值</span>
				<span>诊股</span>
				<span>复盘</span>
			</NewsTabs>

			<BottomBar>
				<IndexBox>
					<IndexTop>
						<IndexValue>3319.15</IndexValue>
						<svg width="17" height="10" viewBox="0 0 17 10" fill="none" stroke="#777" strokeWidth="1.5">
							<path d="m1 9 7.500-8L16 9" />
						</svg>
					</IndexTop>
					<IndexBottom>
						创业板指
						<IndexChange>-0.91%</IndexChange>
					</IndexBottom>
				</IndexBox>
				<TradeButton $bg="#fce0e2" $color="#e8323c">买</TradeButton>
				<TradeButton $bg="#e6ebf8" $color="#5b86dd">卖</TradeButton>
				<TradeButton $bg="#f7f7f7" $color="#666">撤</TradeButton>
				<MoreDots><Dot /><Dot /><Dot /></MoreDots>
			</BottomBar>
		</Page>
	);
}
